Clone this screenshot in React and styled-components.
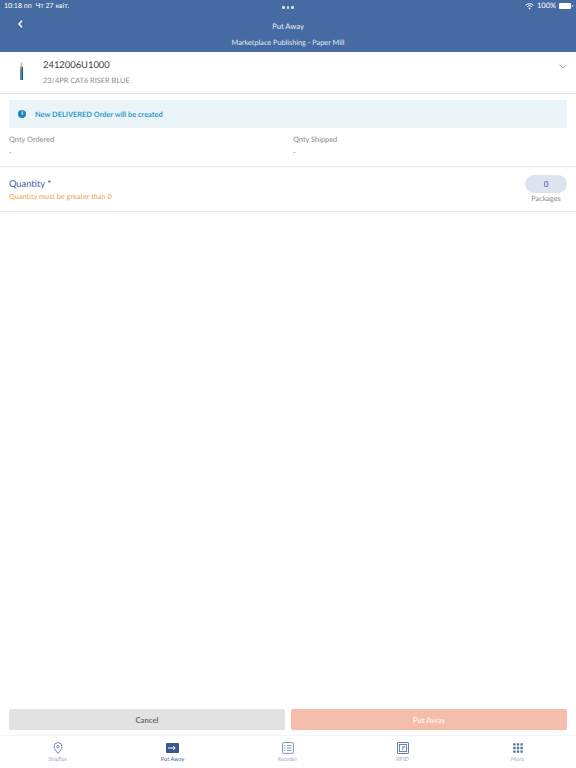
import React from "react";
import styled, { createGlobalStyle } from "styled-components";

const Global = createGlobalStyle`
  html, body { margin: 0; padding: 0; background: #fff; }
  #root { width: 576px; height: 768px; overflow: hidden; }
  * { box-sizing: border-box; }
  body { text-rendering: geometricPrecision; }
`;
const Page = styled.div`
  width: 576px; height: 768px; display: flex; flex-direction: column;
  font-family: Lato, "Liberation Sans", sans-serif; background: #fff; color: #444;
`;
const Header = styled.header`
  height: 52px; flex: none; background: #456ba2; color: #fff;
  display: grid; grid-template-rows: 12px 20px 20px;
`;
const StatusBar = styled.div`
  display: grid; grid-template-columns: 1fr auto 1fr; align-items: center;
  padding: 0 4px; font-size: 7px; line-height: 12px;
`;
const StatusLeft = styled.div`display: flex; gap: 4px;`;
const StatusRight = styled.div`display: flex; gap: 3px; align-items: center; justify-content: flex-end; font-size: 7.5px;`;
const Dots = styled.div`display: flex; gap: 2px; margin-top: 3px;`;
const Dot = styled.span`width: 2.5px; height: 2.5px; border-radius: 50%; background: #dfe6f1;`;
const Battery = styled.span`
  width: 12px; height: 6px; background: #fff; border-radius: 1px; position: relative; margin-right: 1px;
  &::after { content: ""; position: absolute; right: -1.5px; top: 2px; width: 1px; height: 2px; background: #cdd8e8; }
`;
const NavRow = styled.div`
  display: grid; grid-template-columns: 40px 1fr 40px; align-items: center;
`;
const Back = styled.div`display: flex; justify-content: center; margin-top: 4px;`;
const NavTitle = styled.div`text-align: center; font-size: 7.6px; color: #edf1f7; margin-top: 8px;`;
const SubTitle = styled.div`text-align: center; font-size: 7.3px; line-height: 20px; color: #e4eaf3; padding-top: 1px;`;

const ProductRow = styled.section`
  height: 42px; flex: none; border-bottom: 1px solid #e3e3e3;
  display: flex; align-items: flex-start;
`;
const Thumb = styled.div`width: 43px; height: 41px; flex: none; display: flex; justify-content: center; padding: 10px 0 0;`;
const ProductText = styled.div`flex: 1; padding-top: 7px;`;
const ProductCode = styled.div`font-size: 9.4px; line-height: 14px; color: #3c3c3c;`;
const ProductName = styled.div`font-size: 7.4px; line-height: 12px; margin-top: 2px; color: #8a8a8a;`;
const Chevron = styled.div`width: 27px; padding-top: 12px; display: flex; justify-content: center;`;

const Notice = styled.div`
  margin: 6px 9px 0; height: 28px; background: #ebf4f7; border-radius: 2px;
  display: flex; align-items: center; gap: 9px; padding-left: 9px;
  color: #2f9dc9; font-size: 7.4px; font-weight: 700;
`;
const InfoIcon = styled.span`
  width: 8px; height: 8px; border-radius: 50%; background: #1f83bf; color: #fff;
  display: flex; align-items: center; justify-content: center; font-size: 6px; line-height: 8px; font-weight: 900;
`;
const Facts = styled.section`
  height: 39px; flex: none; border-bottom: 1px solid #e3e3e3;
  display: grid; grid-template-columns: 284px 1fr; padding: 6px 0 0 9px;
`;
const Fact = styled.div`font-size: 7.4px; color: #8a8a8a; line-height: 11px;`;
const FactValue = styled.div`font-size: 7.4px; margin-top: 2px; line-height: 11px; color: #777;`;

const QuantityRow = styled.section`
  height: 45px; flex: none; border-bottom: 1px solid #e3e3e3;
  display: flex; justify-content: space-between; padding: 8px 9px 0;
`;
const QtyLabel = styled.div`font-size: 9.3px; line-height: 14px; color: #3d5b9a; margin-top: 2px;`;
const QtyError = styled.div`font-size: 7.3px; line-height: 11px; color: #ef9f4d;`;
const QtyRight = styled.div`width: 42px; display: flex; flex-direction: column; align-items: center;`;
const Pill = styled.div`
  width: 42px; height: 18px; border-radius: 9px; background: #dde3f0; color: #3d5b9a;
  display: flex; align-items: center; justify-content: center; font-size: 8.2px;
`;
const PillLabel = styled.div`font-size: 7.3px; line-height: 10px; margin-top: 1px; color: #8a8a8a;`;

const Spacer = styled.div`flex: 1;`;
const Actions = styled.div`display: grid; grid-template-columns: 1fr 1fr; gap: 6px; padding: 0 9px 5px; flex: none;`;
const ActionButton = styled.button`
  height: 21px; border: 0; border-radius: 2px; padding: 0;
  font: 700 7.7px Lato, "Liberation Sans", sans-serif;
  background: ${p => (p.$primary ? "#f5bdab" : "#e2e2e2")};
  color: ${p => (p.$primary ? "#fdf0ea" : "#6e6e6e")};
`;
const TabBar = styled.nav`
  height: 33px; flex: none; display: grid; grid-template-columns: repeat(5, 115px);
  border-top: 1px solid #f4f5f6; padding-top: 5px;
`;
const Tab = styled.div`
  display: flex; flex-direction: column; align-items: center; gap: 1px;
  font-size: 5.7px; line-height: 8px; color: ${p => (p.$active ? "#3f5f98" : "#a4aec0")};
`;
const IconBox = styled.div`height: 14px; display: flex; align-items: center; justify-content: center;`;

const Pin = () => (
  <svg width="10" height="12" viewBox="0 0 10 12" fill="none" stroke="#6f86ad" strokeWidth="1">
    <path d="M5 11.3C3 8.8 1 6.8 1 4.6a4 4 0 0 1 8 0c0 2.2-2 4.2-4 6.7Z" />
    <circle cx="5" cy="4.6" r="1.2" />
  </svg>
);
const PutAwayIcon = () => (
  <svg width="13" height="10" viewBox="0 0 13 10">
    <rect width="13" height="10" rx="1" fill="#38598f" />
    <path d="M2 5h7M7 3l2.2 2L7 7" stroke="#fff" strokeWidth="1" fill="none" />
  </svg>
);
const ReorderIcon = () => (
  <svg width="12" height="12" viewBox="0 0 12 12" fill="none" stroke="#6f86ad" strokeWidth=".9">
    <rect x=".6" y=".6" width="10.8" height="10.8" rx="1" />
    <path d="M2.5 3.5h1M5 3.5h4.5M2.5 6h1M5 6h4.5M2.5 8.500h1M5 8.500h4.500" />
  </svg>
);
const RfidIcon = () => (
  <svg width="12" height="12" viewBox="0 0 12 12" fill="none" stroke="#56729f" strokeWidth=".9">
    <rect x=".5" y=".5" width="11" height="11" rx=".6" />
    <rect x="2.400" y="2.400" width="7.200" height="7.200" />
    <path d="M6 4v3H4.800M7.400 4v1.500" />
  </svg>
);
const GridIcon = () => (
  <svg width="10" height="10" viewBox="0 0 10 10" fill="#56729f">
    {[0, 1, 2].flatMap(r => [0, 1, 2].map(c => (
      <rect key={`${r}${c}`} x={c * 3.6 + 0.2} y={r * 3.6 + 0.2} width="2.400" height="2.400" rx=".3" />
    )))}
  </svg>
);
const Cable = () => (
  <svg width="5" height="18" viewBox="0 0 5 18">
    <path d="M2 0h1.200l.3 5H1.600Z" fill="#c9bfa8" />
    <rect x="1.200" y="5" width="1.500" height="13" fill="#2d79ab" />
    <rect x="2.700" y="5" width="1.300" height="13" fill="#1f4f7d" />
    <rect x="1.700" y="3" width=".9" height="5" fill="#d2a84f" />
  </svg>
);

const tabs = [
  ["ShipTos", <Pin />], ["Put Away", <PutAwayIcon />, true],
  ["Reorder", <ReorderIcon />], ["RFID", <RfidIcon />], ["More", <GridIcon />],
];

export default function App() {
  return (
    <Page>
      <Global />
      <Header>
        <StatusBar>
          <StatusLeft><span>10:18 пп</span><span>Чт 27 квіт.</span></StatusLeft>
          <Dots><Dot /><Dot /><Dot /></Dots>
          <StatusRight>
            <svg width="9" height="7" viewBox="0 0 9 7" fill="none" stroke="#fff" strokeWidth="1">
              <path d="M.6 2.300a5.500 5.500 0 0 1 7.800 0M2 3.800a3.500 3.500 0 0 1 5 0" />
              <path d="M3.400 5.200a1.500 1.500 0 0 1 2.200 0L4.500 6.500Z" fill="#fff" stroke="none" />
            </svg>
            <span>100%</span>
            <Battery />
          </StatusRight>
        </StatusBar>
        <NavRow>
          <Back>
            <svg width="5" height="8" viewBox="0 0 5 8" fill="none" stroke="#fff" strokeWidth="1.500">
              <path d="M4 .8 1 4l3 3.200" />
            </svg>
          </Back>
          <NavTitle>Put Away</NavTitle>
          <span />
        </NavRow>
        <SubTitle>Marketplace Publishing - Paper Mill</SubTitle>
      </Header>
      <ProductRow>
        <Thumb><Cable /></Thumb>
        <ProductText>
          <ProductCode>2412006U1000</ProductCode>
          <ProductName>23/4PR CAT6 RISER BLUE</ProductName>
        </ProductText>
        <Chevron>
          <svg width="8" height="5" viewBox="0 0 8 5" fill="none" stroke="#999" strokeWidth=".8">
            <path d="M.5.7 4 4l3.500-3.300" />
          </svg>
        </Chevron>
      </ProductRow>
      <Notice>
        <InfoIcon>i</InfoIcon>
        New DELIVERED Order will be created
      </Notice>
      <Facts>
        <Fact>Qnty Ordered<FactValue>-</FactValue></Fact>
        <Fact>Qnty Shipped<FactValue>-</FactValue></Fact>
      </Facts>
      <QuantityRow>
        <div>
          <QtyLabel>Quantity *</QtyLabel>
          <QtyError>Quantity must be greater than 0</QtyError>
        </div>
        <QtyRight>
          <Pill>0</Pill>
          <PillLabel>Packages</PillLabel>
        </QtyRight>
      </QuantityRow>
      <Spacer />
      <Actions>
        <ActionButton>Cancel</ActionButton>
        <ActionButton $primary>Put Away</ActionButton>
      </Actions>
      <TabBar>
        {tabs.map(([label, icon, active]) => (
          <Tab key={label} $active={active}>
            <IconBox>{icon}</IconBox>
            {label}
          </Tab>
        ))}
      </TabBar>
    </Page>
  );
}
